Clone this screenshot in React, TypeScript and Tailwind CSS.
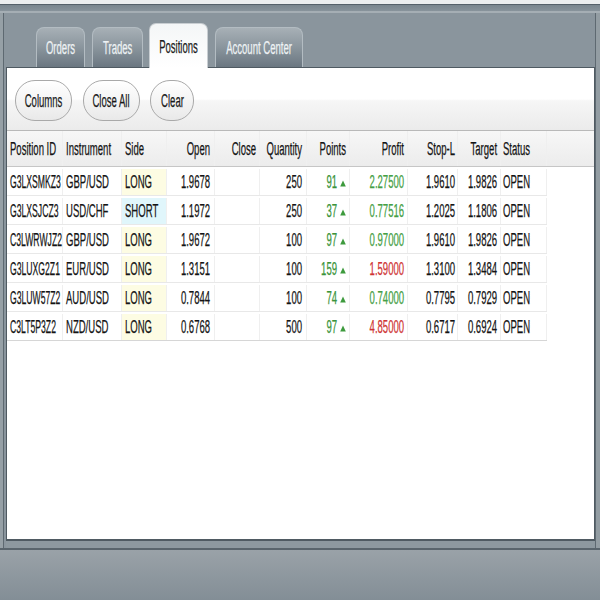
import React from "react";

type Align = "l" | "r" | "c";

function T({ children, o = "l", className = "" }: { children: React.ReactNode; o?: Align; className?: string }) {
  const origin = o === "l" ? "origin-left" : o === "r" ? "origin-right" : "origin-center";
  return <span className={`inline-block whitespace-nowrap scale-x-[0.53] ${origin} ${className}`}>{children}</span>;
}

type Col = { h: string; w: string; a: Align; pad: string };

const cols: Col[] = [
  { h: "Position ID", w: "w-[56px]", a: "l", pad: "pl-[3px]" },
  { h: "Instrument", w: "w-[59px]", a: "l", pad: "pl-[3px]" },
  { h: "Side", w: "w-[45px]", a: "l", pad: "pl-[3px]" },
  { h: "Open", w: "w-[48px]", a: "r", pad: "pr-[4px]" },
  { h: "Close", w: "w-[45px]", a: "r", pad: "pr-[3px]" },
  { h: "Quantity", w: "w-[47px]", a: "r", pad: "pr-[4px]" },
  { h: "Points", w: "w-[43px]", a: "r", pad: "pr-[3px]" },
  { h: "Profit", w: "w-[58px]", a: "r", pad: "pr-[3px]" },
  { h: "Stop-L", w: "w-[50px]", a: "r", pad: "pr-[2px]" },
  { h: "Target", w: "w-[43px]", a: "r", pad: "pr-[3px]" },
  { h: "Status", w: "w-[46px]", a: "l", pad: "pl-[2px]" },
];

type Row = { id: string; inst: string; side: string; open: string; qty: string; pts: string; profit: string; loss: boolean; sl: string; tg: string };

const rows: Row[] = [
  { id: "G3LXSMKZ3", inst: "GBP/USD", side: "LONG", open: "1.9678", qty: "250", pts: "91", profit: "2.27500", loss: false, sl: "1.9610", tg: "1.9826" },
  { id: "G3LXSJCZ3", inst: "USD/CHF", side: "SHORT", open: "1.1972", qty: "250", pts: "37", profit: "0.77516", loss: false, sl: "1.2025", tg: "1.1806" },
  { id: "C3LWRWJZ2", inst: "GBP/USD", side: "LONG", open: "1.9672", qty: "100", pts: "97", profit: "0.97000", loss: false, sl: "1.9610", tg: "1.9826" },
  { id: "G3LUXG2Z1", inst: "EUR/USD", side: "LONG", open: "1.3151", qty: "100", pts: "159", profit: "1.59000", loss: true, sl: "1.3100", tg: "1.3484" },
  { id: "G3LUW57Z2", inst: "AUD/USD", side: "LONG", open: "0.7844", qty: "100", pts: "74", profit: "0.74000", loss: false, sl: "0.7795", tg: "0.7929" },
  { id: "C3LT5P3Z2", inst: "NZD/USD", side: "LONG", open: "0.6768", qty: "500", pts: "97", profit: "4.85000", loss: true, sl: "0.6717", tg: "0.6924" },
];

function Cell({ c, children, extra = "" }: { c: Col; children?: React.ReactNode; extra?: string }) {
  const just = c.a === "l" ? "justify-start" : "justify-end";
  return (
    <div className={`flex items-center shrink-0 h-full border-r border-[#efefef] ${c.w} ${c.pad} ${just} ${extra}`}>
      {children}
    </div>
  );
}

function Tab({ label, w, active = false, ml }: { label: string; w: string; active?: boolean; ml: string }) {
  if (active) {
    return (
      <div className={`relative z-10 ${w} ${ml} h-[45px] -mb-px rounded-t-[7px] border border-b-0 border-[#c9ced2] bg-gradient-to-b from-[#f4f6f7] to-white flex items-center justify-center text-[#1c1c1c] pt-[2px]`}>
        <T o="c">{label}</T>
      </div>
    );
  }
  return (
    <div className={`${w} ${ml} h-[40px] rounded-t-[8px] border border-b-0 border-[#b3bcc2] bg-gradient-to-b from-[#a7b0b6] via-[#8a959d] to-[#6b7781] flex items-center justify-center text-[#eef2f4] pt-[1px]`}>
      <T o="c">{label}</T>
    </div>
  );
}

function Btn({ label, w, ml }: { label: string; w: string; ml: string }) {
  return (
    <div className={`${w} ${ml} h-[41px] rounded-[20px] border border-[#a9a9a9] bg-gradient-to-b from-white to-[#e9e9e9] flex items-center justify-center text-[#1a1a1a] pt-[1px]`}>
      <T o="c">{label}</T>
    </div>
  );
}

function Tri() {
  return (
    <svg width="6" height="7" viewBox="0 0 6 7" className="ml-[3px] shrink-0 mt-[2px]">
      <path d="M3 0.5 L5.8 6.5 L0.2 6.5 Z" fill="#3d9a3d" />
    </svg>
  );
}

export default function App() {
  return (
    <div className="w-[600px] h-[600px] overflow-hidden flex flex-col bg-[#8a959d] font-['Liberation_Sans',Arial,sans-serif] text-[18px] leading-none [-webkit-text-stroke:0.25px]">
      <div className="h-[4px] shrink-0 bg-[#eceeef]" />
      <div className="h-px shrink-0 bg-[#56616a]" />
      <div className="h-[6px] shrink-0 bg-gradient-to-b from-[#7a868e] to-[#88939b]" />
      <div className="h-[2px] shrink-0 bg-[#a5aeb4]" />
      <div className="flex h-[535px] shrink-0">
        <div className="w-[3px] bg-[#96a0a6]" />
        <div className="w-px bg-[#5e6971]" />
        <div className="w-[2px] bg-[#8a959d]" />
        <div className="w-[589px] flex flex-col">
          <div className="h-[54px] flex items-end">
            <Tab label="Orders" w="w-[49px]" ml="ml-[30px]" />
            <Tab label="Trades" w="w-[51px]" ml="ml-[7px]" />
            <Tab label="Positions" w="w-[59px]" ml="ml-[6px]" active />
            <Tab label="Account Center" w="w-[88px]" ml="ml-[7px]" />
          </div>
          <div className="h-[474px] bg-white border border-[#4f5a62] border-b-2 flex flex-col">
            <div className="h-[63px] shrink-0 border-b border-[#b9b9b9] bg-[linear-gradient(to_bottom,#ffffff_0%,#ffffff_50%,#f6f6f6_53%,#ebebeb_100%)] flex items-start pt-[12px]">
              <Btn label="Columns" w="w-[57px]" ml="ml-[8px]" />
              <Btn label="Close All" w="w-[57px]" ml="ml-[11px]" />
              <Btn label="Clear" w="w-[44px]" ml="ml-[10px]" />
            </div>
            <div className="h-[36px] shrink-0 flex border-b border-[#c6c6c6] bg-gradient-to-b from-[#f7f7f7] to-[#ececec] text-[#141414]">
              {cols.map((c) => (
                <Cell key={c.h} c={c} extra="border-[#d3d3d3]">
                  <T o={c.a}>{c.h}</T>
                </Cell>
              ))}
            </div>
            <div className="w-[540px] text-[#141414]">
              {rows.map((r, i) => (
                <div key={r.id} className={`h-[29px] flex pt-[2px] border-b ${i === rows.length - 1 ? "border-[#d6d6d6]" : "border-[#e8e8e8]"}`}>
                  <Cell c={cols[0]}><span className="inline-block whitespace-nowrap scale-x-[0.48] origin-left">{r.id}</span></Cell>
                  <Cell c={cols[1]}><T>{r.inst}</T></Cell>
                  <Cell c={cols[2]} extra={r.side === "LONG" ? "bg-[#fdfce3]" : "bg-[#e0f6fb]"}><T>{r.side}</T></Cell>
                  <Cell c={cols[3]}><T o="r">{r.open}</T></Cell>
                  <Cell c={cols[4]} />
                  <Cell c={cols[5]}><T o="r">{r.qty}</T></Cell>
                  <Cell c={cols[6]}>
                    <T o="r" className="text-[#3a943a]">{r.pts}</T>
                    <Tri />
                  </Cell>
                  <Cell c={cols[7]}>
                    <T o="r" className={r.loss ? "text-[#cf3434]" : "text-[#45a045]"}>{r.profit}</T>
                  </Cell>
                  <Cell c={cols[8]}><T o="r">{r.sl}</T></Cell>
                  <Cell c={cols[9]}><T o="r">{r.tg}</T></Cell>
                  <Cell c={cols[10]}><T>OPEN</T></Cell>
                </div>
              ))}
            </div>
          </div>
          <div className="flex-1 bg-[#8d989f]" />
        </div>
        <div className="w-px bg-[#5e6971]" />
        <div className="w-[4px] bg-[#939da3]" />
      </div>
      <div className="h-[2px] shrink-0 bg-[#59646c]" />
      <div className="flex-1 bg-gradient-to-b from-[#9aa2a8] to-[#838e96]" />
    </div>
  );
}
